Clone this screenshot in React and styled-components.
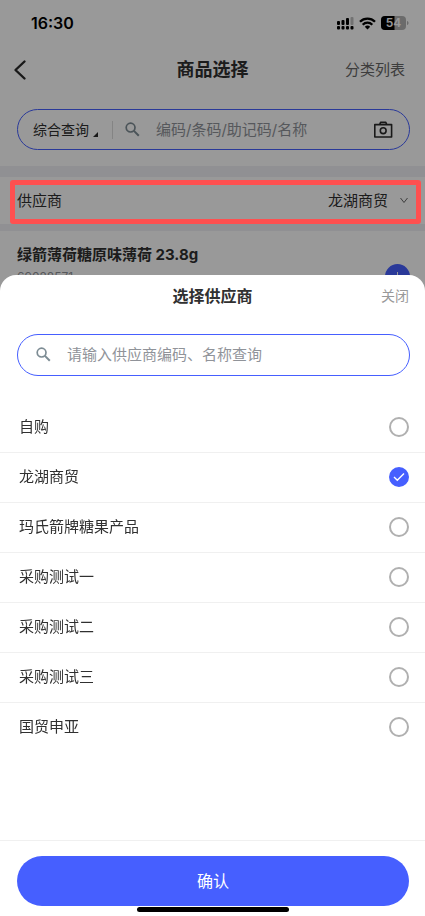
import React, { useState } from 'react';
import styled, { createGlobalStyle } from 'styled-components';

const GlobalStyle = createGlobalStyle`
  * {
    box-sizing: border-box;
  }

  body {
    margin: 0;
    background: #fff;
    color: #303030;
    font-family: Inter, 'Noto Sans CJK SC', sans-serif;
    font-size: 15px;
    line-height: 22px;
  }

  button, input {
    font: inherit;
    color: inherit;
    border: 0;
    padding: 0;
    background: none;
  }

  button {
    cursor: pointer;
  }

  svg {
    display: block;
    flex-shrink: 0;
  }
`;

const Page = styled.div`
  height: 100vh;
  overflow: hidden;
`;

const StatusBar = styled.div`
  display: flex;
  align-items: center;
  justify-content: space-between;
  height: 46px;
  padding: 0 16px 0 31px;
  color: #000;
  font-size: 16px;
  font-weight: 600;
`;

const StatusIcons = styled.div`
  display: flex;
  align-items: center;
  gap: 5px;
`;

const NavBar = styled.header`
  display: grid;
  grid-template-columns: 1fr auto 1fr;
  align-items: center;
  height: 48px;
  padding: 0 20px;
`;

const BackButton = styled.button`
  justify-self: start;
  margin-left: -8px;
`;

const NavTitle = styled.h1`
  margin: 0;
  font-size: 18px;
  font-weight: 700;
`;

const NavLink = styled.a`
  justify-self: end;
  color: #666;
  text-decoration: none;
`;

const SearchBox = styled.div`
  display: flex;
  align-items: center;
  height: ${p => p.$height};
  margin: ${p => p.$margin};
  padding: ${p => p.$padding};
  border: 1px solid #465fff;
  border-radius: 21px;
`;

const SearchType = styled.button`
  display: flex;
  align-items: flex-end;
  gap: 4px;
  font-size: 14px;
`;

const Divider = styled.span`
  width: 1px;
  height: 18px;
  margin: 0 12px 0 14px;
  background: #dcdcdc;
`;

const SearchInput = styled.input`
  flex: 1;
  min-width: 0;
  margin-left: 16px;
  outline: none;

  &::placeholder {
    color: #909399;
    opacity: 1;
  }
`;

const Band = styled.div`
  height: ${p => p.$height};
  background: #f0f0f5;
`;

const SupplierRow = styled.div`
  position: relative;
  display: flex;
  align-items: center;
  justify-content: space-between;
  height: 47px;
  padding: 0 16px 0 17px;
`;

const SupplierButton = styled.button`
  display: flex;
  align-items: center;
  gap: 11px;
`;

const Highlight = styled.div`
  position: absolute;
  inset: 3px 4px 0 10px;
  z-index: 2;
  border: 5px solid #ff5050;
  border-radius: 3px;
  pointer-events: none;
`;

const Product = styled.article`
  display: flex;
  align-items: flex-end;
  justify-content: space-between;
  padding: 13px 15px 0 17px;
`;

const ProductName = styled.h2`
  margin: 0;
  font-size: 15px;
  font-weight: 700;
`;

const ProductCode = styled.p`
  margin: 0;
  color: #909399;
  font-size: 12px;
`;

const AddButton = styled.button`
  display: grid;
  place-items: center;
  width: 25px;
  height: 25px;
  margin-bottom: -1px;
  border-radius: 50%;
  background: #465fff;
  color: #fff;
`;

const Mask = styled.div`
  position: fixed;
  inset: 0;
  z-index: 1;
  background: rgba(0, 0, 0, .4);
`;

const Sheet = styled.section`
  position: fixed;
  right: 0;
  bottom: 0;
  left: 0;
  z-index: 3;
  display: flex;
  flex-direction: column;
  height: 70vh;
  border-radius: 16px 16px 0 0;
  background: #fff;
`;

const SheetHeader = styled.header`
  display: grid;
  grid-template-columns: 1fr auto 1fr;
  align-items: center;
  height: 43px;
  padding: 0 16px;
`;

const SheetTitle = styled.h2`
  grid-column: 2;
  margin: 0;
  font-size: 16px;
  font-weight: 700;
`;

const CloseButton = styled.button`
  justify-self: end;
  color: #999;
  font-size: 14px;
`;

const Options = styled.div`
  flex: 1;
  overflow: auto;
`;

const Option = styled.label`
  display: flex;
  align-items: center;
  justify-content: space-between;
  height: 50px;
  padding: 0 16px 0 19px;
  border-bottom: 1px solid #f0f0f0;

  &:last-child {
    border-bottom-color: transparent;
  }
`;

const RadioBox = styled.span`
  display: grid;
  place-items: center;
  color: #fff;

  > * {
    grid-area: 1 / 1;
  }

  svg {
    pointer-events: none;
  }
`;

const Radio = styled.input`
  appearance: none;
  width: 20px;
  height: 20px;
  margin: 0;
  border: 2px solid #b0b0b0;
  border-radius: 50%;

  &:checked {
    border-color: #465fff;
    background: #465fff;
  }
`;

const Footer = styled.footer`
  position: relative;
  padding: 15px 16px 10px 17px;
  border-top: 1px solid #f0f0f0;
`;

const ConfirmButton = styled.button`
  width: 100%;
  height: 50px;
  border-radius: 25px;
  background: #465fff;
  color: #fff;
  font-size: 16px;
`;

const HomeIndicator = styled.div`
  position: absolute;
  bottom: 4px;
  left: 50%;
  width: 152px;
  height: 5px;
  margin-left: -76px;
  border-radius: 3px;
  background: #000;
`;

const SignalIcon = () => (
  <svg width="18" height="14" viewBox="0 0 18 14">
    <g fill="#000">
      <rect x="1" y="5" width="3" height="4" rx="1" />
      <rect x="5.500" y="4" width="3" height="5" rx="1" />
      <rect x="10" y="2" width="3" height="7" rx="1" />
      <rect x="14.500" y="1" width="3" height="8" rx="1" opacity=".25" />
      <rect x="1" y="10" width="3" height="3.500" rx="1" />
      <rect x="5.500" y="10" width="3" height="3.500" rx="1" />
      <rect x="10" y="10" width="3" height="3.500" rx="1" />
      <rect x="14.500" y="10" width="3" height="3.500" rx="1" />
    </g>
  </svg>
);

const WifiIcon = () => (
  <svg width="17" height="13" viewBox="0 0 17 13" fill="none" stroke="#000" strokeWidth="2.300">
    <path d="M1 4.800a10.600 10.600 0 0 1 15 0" />
    <path d="M3.700 7.700a6.800 6.800 0 0 1 9.600 0" />
    <path d="M5.800 9.700a3.900 3.900 0 0 1 5.400 0L8.500 12.600z" fill="#000" stroke="none" />
  </svg>
);

const BatteryIcon = () => (
  <svg width="28" height="14" viewBox="0 0 28 14">
    <rect width="25" height="14" rx="4" fill="#000" opacity=".3" />
    <path d="M4 0h9.500v14H4a4 4 0 0 1-4-4V4a4 4 0 0 1 4-4z" fill="#000" />
    <path d="M26 5c2 .6 2 3.400 0 4z" fill="#000" opacity=".3" />
    <text x="12.500" y="11.300" fill="#fff" fontSize="12" fontWeight="600" textAnchor="middle">54</text>
  </svg>
);

const SearchIcon = () => (
  <svg width="15" height="15" viewBox="0 0 15 15" fill="none" stroke="#7d8c94">
    <circle cx="5.600" cy="5.600" r="4.400" strokeWidth="1.700" />
    <path d="M8.900 8.900l4.900 4.900" strokeWidth="2" />
  </svg>
);

const CameraIcon = () => (
  <svg width="20" height="18" viewBox="0 0 20 18" fill="none" stroke="#2b2b2b" strokeWidth="1.600">
    <path d="M1.800 3.600h16.800v12.400H1.800z" strokeLinejoin="round" />
    <path d="M6.800 3.400l.8-2h5.200l.8 2" strokeLinejoin="round" />
    <circle cx="10.200" cy="9.700" r="2.900" />
  </svg>
);

const suppliers = ['自购', '龙湖商贸', '玛氏箭牌糖果产品', '采购测试一', '采购测试二', '采购测试三', '国贸申亚'];

const App = () => {
  const [selected, setSelected] = useState('龙湖商贸');

  return (
    <>
      <GlobalStyle />
      <Page>
        <StatusBar>
          <span>16:30</span>
          <StatusIcons>
            <SignalIcon />
            <WifiIcon />
            <BatteryIcon />
          </StatusIcons>
        </StatusBar>
        <NavBar>
          <BackButton aria-label="返回">
            <svg width="16" height="22" viewBox="0 0 16 22" fill="none" stroke="#2b2b2b" strokeWidth="2.400">
              <path d="M12.500 2.500L3.500 11l9 8.500" strokeLinecap="round" strokeLinejoin="round" />
            </svg>
          </BackButton>
          <NavTitle>商品选择</NavTitle>
          <NavLink href="#category">分类列表</NavLink>
        </NavBar>
        <SearchBox $height="41px" $margin="15px 15px 16px 17px" $padding="0 16px 0 15px">
          <SearchType>
            综合查询
            <svg width="5" height="9" viewBox="0 0 5 9"><path d="M5 0v5H0z" fill="#2b2b2b" /></svg>
          </SearchType>
          <Divider />
          <SearchIcon />
          <SearchInput aria-label="商品查询" placeholder="编码/条码/助记码/名称" />
          <CameraIcon />
        </SearchBox>
        <Band $height="11px" />
        <SupplierRow>
          <span>供应商</span>
          <SupplierButton>
            龙湖商贸
            <svg width="10" height="7" viewBox="0 0 10 7" fill="none" stroke="#666">
              <path d="M1.500 1L5 5.500 8.500 1" />
            </svg>
          </SupplierButton>
          <Highlight />
        </SupplierRow>
        <Band $height="7px" />
        <Product>
          <div>
            <ProductName>绿箭薄荷糖原味薄荷 23.8g</ProductName>
            <ProductCode>69028571</ProductCode>
          </div>
          <AddButton aria-label="添加">
            <svg width="9" height="9" viewBox="0 0 9 9" stroke="#fff">
              <path d="M4.500 0v9M0 4.500h9" />
            </svg>
          </AddButton>
        </Product>
      </Page>
      <Mask />
      <Sheet role="dialog" aria-label="选择供应商">
        <SheetHeader>
          <SheetTitle>选择供应商</SheetTitle>
          <CloseButton>关闭</CloseButton>
        </SheetHeader>
        <SearchBox $height="42px" $margin="16px 15px 27px 17px" $padding="0 18px">
          <SearchIcon />
          <SearchInput aria-label="供应商查询" placeholder="请输入供应商编码、名称查询" />
        </SearchBox>
        <Options>
          {suppliers.map(name => (
            <Option key={name}>
              {name}
              <RadioBox>
                <Radio
                  type="radio"
                  name="supplier"
                  checked={selected === name}
                  onChange={() => setSelected(name)}
                />
                {selected === name && (
                  <svg width="12" height="10" viewBox="0 0 12 10" fill="none" stroke="#fff" strokeWidth="1.400">
                    <path d="M1 5l3.300 3.300L11 1.500" />
                  </svg>
                )}
              </RadioBox>
            </Option>
          ))}
        </Options>
        <Footer>
          <ConfirmButton>确认</ConfirmButton>
          <HomeIndicator />
        </Footer>
      </Sheet>
    </>
  );
};

export default App;
